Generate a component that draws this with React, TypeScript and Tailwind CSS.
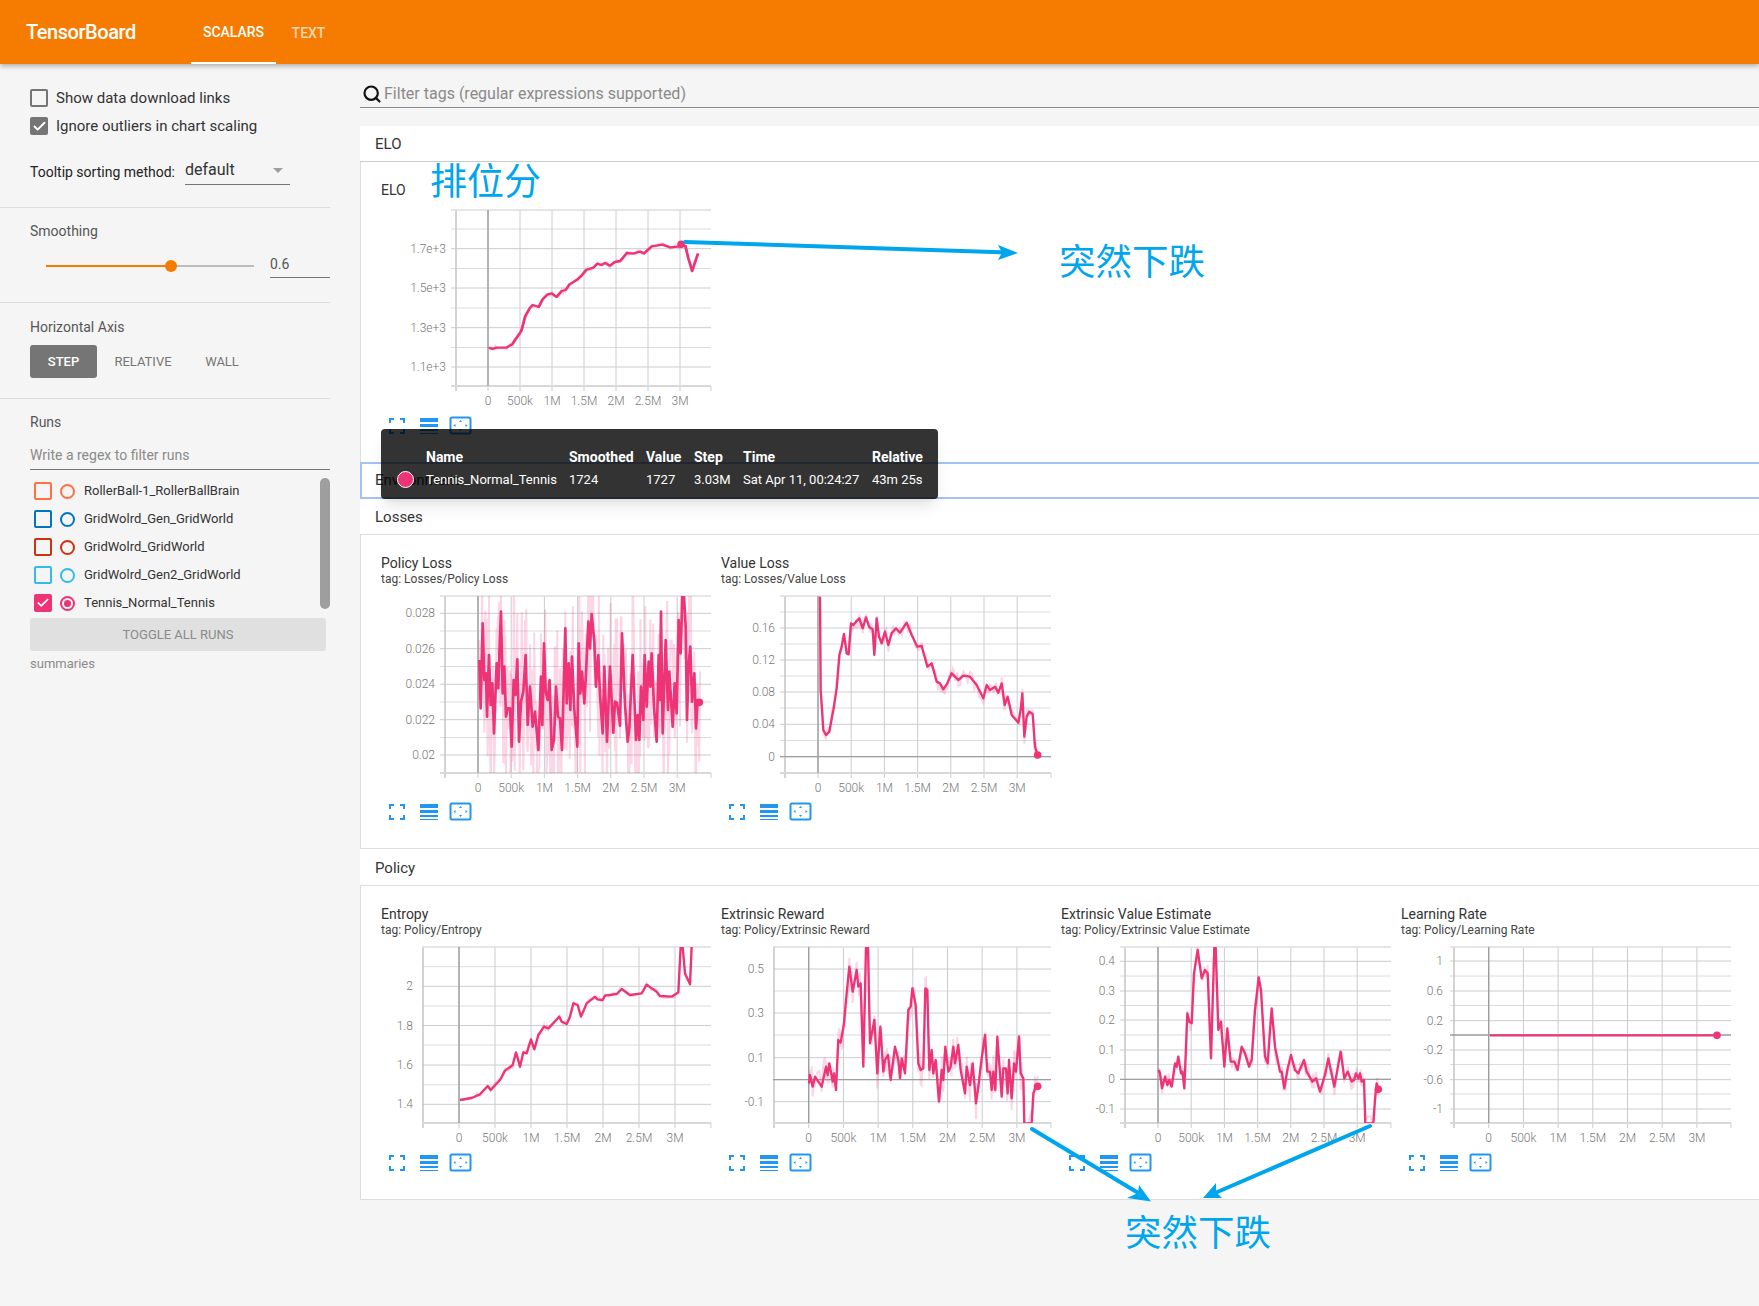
import React from 'react';
import { Search, Check } from 'lucide-react';

type Pt = [number, number];

interface Series {
  origin: Pt;
  scaleX?: number;
  smooth: Pt[];
  jitter: number;
  dot: Pt;
  width?: number;
}

interface ChartProps {
  title: string;
  tag?: string;
  svgTop: number;
  cardX: number;
  left: number;
  axisX: number;
  x0: number;
  dx: number;
  top: number;
  bottom: number;
  labelGap?: number;
  major: [number, string][];
  minor: number[];
  zeroY?: number;
  series: Series;
}

const RUN = '#ee3377';
const X_LABELS = ['0', '500k', '1M', '1.5M', '2M', '2.5M', '3M'];

// stable noise for the faded raw line
const noise = (i: number) => {
  const v = Math.sin(i * 12.9898 + 4.1) * 43758.5453;
  return (v - Math.floor(v)) * 2 - 1;
};

const rawLine = (pts: Pt[], amp: number): Pt[] => {
  const out: Pt[] = [];
  pts.forEach((p, i) => {
    out.push([p[0], p[1] + noise(i) * amp]);
    const next = pts[i + 1];
    if (!next) return;
    for (let k = 1; k < 3; k++) {
      const t = k / 3;
      out.push([p[0] + (next[0] - p[0]) * t, p[1] + (next[1] - p[1]) * t + noise(i * 3 + k + 300) * amp]);
    }
  });
  return out;
};

const toPoints = (pts: Pt[]) => pts.map(p => p.join(',')).join(' ');

const Chart: React.FC<ChartProps> = ({ title, tag, svgTop, cardX, left, axisX, x0, dx, top, bottom, labelGap = 5, major, minor, zeroY, series }) => {
  const right = cardX + 330;
  const clip = 'clip-' + title.replace(/\s/g, '');
  const sx = series.scaleX ?? 3;
  const vertical = X_LABELS.map((_, i) => x0 + dx * i);
  return (
    <div className="w-[340px] shrink-0">
      <div className="h-[17px] text-[14px] leading-[17px] text-[#333]">{title}</div>
      {tag ? <div className="h-[14px] mb-1 text-[12px] leading-[14px] text-[#444]">{tag}</div> : <div className="h-[5px]" />}
      <svg width={340} height={208} className="block">
        <g transform={`translate(${-cardX} ${-svgTop})`}>
          <clipPath id={clip}>
            <rect x={axisX} y={top} width={right - axisX} height={bottom - top} />
          </clipPath>
          {minor.map(y => (
            <line key={y} x1={left} x2={right} y1={y} y2={y} stroke="#dcdcdc" />
          ))}
          {major.map(([y]) => (
            <line key={y} x1={left} x2={right} y1={y} y2={y} stroke="#cccccc" />
          ))}
          {vertical.map(x => (
            <line key={x} x1={x} x2={x} y1={top} y2={bottom + 5} stroke="#cccccc" />
          ))}
          <line x1={axisX} x2={axisX} y1={top} y2={bottom + 5} stroke="#c4c4c4" strokeWidth={1.5} />
          <line x1={right} x2={right} y1={bottom} y2={bottom + 5} stroke="#cfcfcf" />
          <line x1={left} x2={right} y1={top} y2={top} stroke="#dedede" strokeWidth={1.5} />
          <line x1={left} x2={right} y1={bottom} y2={bottom} stroke="#d8d8d8" strokeWidth={2} />
          {zeroY !== undefined && <line x1={left} x2={right} y1={zeroY} y2={zeroY} stroke="#9e9e9e" strokeWidth={1.3} />}
          <line x1={x0} x2={x0} y1={top} y2={bottom} stroke="#9e9e9e" strokeWidth={1.4} />
          {major.map(([y, label]) => (
            <text key={label} x={left - labelGap} y={y + 4} textAnchor="end" fontSize={12} fontWeight={300} fill="#777">
              {label}
            </text>
          ))}
          {X_LABELS.map((label, i) => (
            <text key={label} x={x0 + dx * i} y={bottom + 19} textAnchor="middle" fontSize={12} fontWeight={300} fill="#777">
              {label}
            </text>
          ))}
          <g clipPath={`url(#${clip})`}>
            <g transform={`translate(${series.origin[0]} ${series.origin[1]}) scale(${1 / sx} ${1 / 3})`}>
              {series.jitter > 0 && (
                <polyline points={toPoints(rawLine(series.smooth, series.jitter))} fill="none" stroke={RUN} strokeOpacity={0.2} strokeWidth={6} />
              )}
              <polyline points={toPoints(series.smooth)} fill="none" stroke={RUN} strokeWidth={series.width ?? 7} strokeLinejoin="round" />
            </g>
          </g>
          <circle cx={series.origin[0] + series.dot[0] / sx} cy={series.origin[1] + series.dot[1] / 3} r={3.8} fill={RUN} />
        </g>
      </svg>
      <ChartIcons />
    </div>
  );
};

const ChartIcons = () => (
  <svg width={100} height={20} className="block mt-[4px]" fill="none">
    <g stroke="#2196f3" strokeWidth={2}>
      <path d="M9 7V3h4M19 3h4v4M23 13v4h-4M13 17H9v-4" />
      <rect x={69.5} y={1.5} width={20} height={16} rx={1.5} />
    </g>
    <g fill="#2196f3">
      <rect x={39} y={2} width={18} height={4} />
      <rect x={39} y={8} width={18} height={3} />
      <rect x={39} y={13} width={18} height={2} />
      <rect x={39} y={17} width={18} height={1} />
      <path d="M79.5 4l1.5 2h-3zM79.5 15l1.5-2h-3zM72.5 9.5l2-1.5v3zM86.5 9.5l-2-1.5v3z" />
    </g>
  </svg>
);

const policyLoss: Pt[] = [[358,360],[362,505],[368,250],[373,420],[378,400],[381,530],[387,345],[392,495],[397,430],[402,580],[410,370],[415,445],[418,340],[423,215],[428,460],[433,380],[438,530],[443,505],[450,505],[455,620],[461,420],[466,465],[472,358],[477,605],[483,485],[490,455],[497,345],[503,555],[510,440],[518,560],[525,515],[535,630],[543,410],[547,555],[552,310],[557,455],[563,480],[569,420],[575,630],[582,600],[588,440],[594,530],[600,535],[606,630],[616,265],[620,490],[626,370],[631,510],[636,350],[643,510],[652,620],[656,310],[661,460],[666,395],[673,490],[678,400],[685,245],[690,325],[695,222],[703,305],[708,440],[715,345],[720,465],[728,580],[733,380],[741,605],[750,380],[755,480],[760,578],[765,485],[771,488],[780,557],[786,280],[795,495],[803,605],[808,565],[818,345],[828,600],[833,525],[838,600],[843,440],[850,540],[854,345],[860,500],[866,365],[871,440],[875,340],[882,500],[890,605],[896,345],[900,480],[903,215],[908,580],[917,300],[924,510],[928,395],[938,560],[944,430],[950,520],[956,240],[962,340],[967,170],[972,170],[977,260],[981,540],[986,370],[991,320],[996,485],[1003,400],[1008,565],[1013,480],[1020,485]];
const valueLoss: Pt[] = [[330,170],[332,450],[340,570],[348,585],[358,575],[370,510],[380,445],[388,345],[395,320],[402,282],[410,340],[416,343],[423,250],[430,255],[438,245],[448,235],[458,265],[468,232],[478,262],[488,268],[493,345],[500,235],[507,290],[515,310],[525,275],[535,315],[545,280],[558,265],[570,278],[590,248],[605,285],[622,320],[635,318],[652,380],[665,370],[680,425],[690,430],[700,448],[712,430],[725,400],[735,410],[745,420],[760,407],[780,410],[800,435],[820,475],[830,435],[840,450],[855,440],[865,458],[875,430],[884,495],[893,470],[905,525],[925,548],[932,510],[937,460],[943,590],[950,530],[958,515],[968,522],[975,620],[983,645]];
const elo: Pt[] = [[326,650],[335,654],[345,650],[370,650],[385,640],[395,622],[408,600],[418,555],[430,530],[437,522],[452,528],[462,505],[475,490],[485,487],[497,498],[510,480],[520,477],[530,460],[548,447],[558,437],[572,417],[590,410],[600,398],[610,402],[620,396],[632,404],[645,393],[658,390],[675,366],[690,368],[708,362],[718,367],[738,346],[765,341],[785,349],[805,347],[812,342],[823,345],[830,380],[840,420],[855,367]];
const entropy: Pt[] = [[300,630],[335,624],[360,613],[383,588],[392,600],[420,570],[435,542],[458,525],[468,487],[480,530],[490,487],[500,490],[513,448],[523,478],[535,435],[552,410],[565,415],[598,380],[605,395],[620,402],[630,380],[640,340],[653,345],[663,380],[680,340],[705,320],[712,328],[728,330],[735,317],[770,312],[785,297],[810,315],[845,310],[860,284],[875,295],[890,305],[900,318],[935,320],[955,307],[962,170],[968,170],[975,250],[990,283],[995,170]];
const reward: Pt[] = [[297,580],[300,555],[308,590],[315,560],[335,590],[348,530],[353,555],[358,520],[368,575],[372,550],[378,600],[385,450],[392,458],[402,400],[408,330],[418,230],[428,305],[440,240],[445,290],[452,280],[460,530],[468,170],[474,170],[480,460],[493,390],[502,550],[511,410],[520,545],[525,510],[534,495],[542,570],[555,470],[565,510],[570,565],[575,505],[585,550],[595,360],[602,350],[607,295],[617,345],[625,520],[632,540],[640,535],[646,295],[652,300],[658,540],[665,480],[670,550],[677,510],[687,635],[695,540],[700,570],[706,470],[715,545],[722,530],[730,470],[735,520],[745,465],[752,540],[765,610],[770,530],[780,585],[788,520],[798,640],[805,590],[815,505],[825,435],[832,545],[840,545],[845,600],[850,545],[856,600],[862,440],[875,620],[880,535],[888,535],[893,610],[897,510],[905,625],[912,520],[918,545],[927,440],[932,550],[940,565],[943,700],[965,700],[970,610],[977,590],[985,590]];
const valueEstimate: Pt[] = [[326,540],[330,550],[336,595],[345,560],[352,585],[358,570],[365,590],[375,520],[380,530],[385,500],[393,550],[397,545],[403,595],[412,370],[418,395],[425,400],[432,250],[443,180],[455,265],[465,240],[473,250],[483,505],[493,170],[497,170],[505,420],[513,395],[523,530],[532,415],[542,515],[553,515],[563,540],[575,470],[585,490],[597,530],[605,510],[615,360],[626,262],[633,300],[645,500],[653,520],[665,355],[675,470],[690,545],[695,545],[703,595],[712,540],[723,495],[735,540],[745,550],[762,510],[770,545],[787,575],[793,570],[798,565],[810,605],[825,555],[835,505],[853,590],[872,485],[883,565],[893,545],[905,575],[912,570],[918,550],[925,565],[930,550],[935,575],[942,570],[946,700],[970,700],[975,630],[980,580],[985,598]];

const LOSS_TOP = 590;
const POLICY_TOP = 941;

const lossCharts: ChartProps[] = [
  {
    title: 'Policy Loss', tag: 'tag: Losses/Policy Loss', svgTop: LOSS_TOP, cardX: 381, left: 440, axisX: 445, x0: 478, dx: 33.2, top: 596, bottom: 773,
    major: [[613.3, '0.028'], [648.7, '0.026'], [684.3, '0.024'], [719.7, '0.022'], [755, '0.02']],
    minor: [631, 666.5, 702, 737.5],
    series: { origin: [360, 540], smooth: policyLoss, jitter: 260, dot: [1018, 487], width: 8 },
  },
  {
    title: 'Value Loss', tag: 'tag: Losses/Value Loss', svgTop: LOSS_TOP, cardX: 721, left: 780, axisX: 785, x0: 818, dx: 33.2, top: 596, bottom: 773,
    major: [[628, '0.16'], [660, '0.12'], [692, '0.08'], [724.3, '0.04'], [756.7, '0']],
    minor: [612, 644, 676, 708, 740.5],
    zeroY: 756.7,
    series: { origin: [710, 540], smooth: valueLoss, jitter: 22, dot: [983, 645] },
  },
];

const policyCharts: ChartProps[] = [
  {
    title: 'Entropy', tag: 'tag: Policy/Entropy', svgTop: POLICY_TOP, cardX: 381, left: 422, axisX: 423, x0: 459, dx: 36, top: 947, bottom: 1123, labelGap: 9,
    major: [[986.3, '2'], [1025.5, '1.8'], [1065, '1.6'], [1104.3, '1.4']],
    minor: [966.7, 1006, 1045, 1084.7],
    series: { origin: [360, 890], smooth: entropy, jitter: 8, dot: [995, 100] },
  },
  {
    title: 'Extrinsic Reward', tag: 'tag: Policy/Extrinsic Reward', svgTop: POLICY_TOP, cardX: 721, left: 773, axisX: 774, x0: 808.7, dx: 34.7, top: 947, bottom: 1123, labelGap: 9,
    major: [[969, '0.5'], [1013, '0.3'], [1057.7, '0.1'], [1101.7, '-0.1']],
    minor: [991, 1035, 1079.7],
    zeroY: 1079.7,
    series: { origin: [710, 890], smooth: reward, jitter: 50, dot: [983, 589] },
  },
  {
    title: 'Extrinsic Value Estimate', tag: 'tag: Policy/Extrinsic Value Estimate', svgTop: POLICY_TOP, cardX: 1061, left: 1120, axisX: 1125, x0: 1158, dx: 33.2, top: 947, bottom: 1123,
    major: [[961.3, '0.4'], [991, '0.3'], [1020, '0.2'], [1050, '0.1'], [1079.3, '0'], [1109, '-0.1']],
    minor: [976, 1005.5, 1035, 1064.5, 1094],
    zeroY: 1079.3,
    series: { origin: [1050, 890], smooth: valueEstimate, jitter: 26, dot: [985, 598] },
  },
  {
    title: 'Learning Rate', tag: 'tag: Policy/Learning Rate', svgTop: POLICY_TOP, cardX: 1401, left: 1450, axisX: 1454, x0: 1488.7, dx: 34.7, top: 947, bottom: 1123, labelGap: 7,
    major: [[961, '1'], [991, '0.6'], [1020.7, '0.2'], [1050, '-0.2'], [1079.7, '-0.6'], [1109, '-1']],
    minor: [976, 1005.5, 1035, 1064.5, 1094],
    zeroY: 1035,
    series: { origin: [1390, 890], smooth: [[300, 436], [980, 436]], jitter: 0, dot: [981, 436] },
  },
];

const eloChart: ChartProps = {
  title: 'ELO', svgTop: 203, cardX: 381, left: 451, axisX: 456, x0: 488, dx: 32, top: 209, bottom: 385,
  major: [[247.7, '1.7e+3'], [287, '1.5e+3'], [326.7, '1.3e+3'], [366, '1.1e+3']],
  minor: [228, 267.5, 307, 346.5],
  series: { origin: [360, 130], scaleX: 2.529, smooth: elo, jitter: 6, dot: [812, 340] },
};

const runs = [
  { name: 'RollerBall-1_RollerBallBrain', color: '#ff7043' },
  { name: 'GridWolrd_Gen_GridWorld', color: '#0077bb' },
  { name: 'GridWolrd_GridWorld', color: '#cc3311' },
  { name: 'GridWolrd_Gen2_GridWorld', color: '#33bbee' },
  { name: 'Tennis_Normal_Tennis', color: '#ee3377', checked: true },
];

const Sidebar = () => (
  <aside className="w-[330px] shrink-0 text-[14px] text-[#444]">
    <div className="h-[144px] border-b border-[#ddd] pl-[30px] pt-[25px]">
      <label className="flex items-center h-[18px] gap-2 text-[15px] text-[#333]">
        <span className="w-[18px] h-[18px] rounded-[2px] border-2 border-[#757575]" />
        Show data download links
      </label>
      <label className="flex items-center h-[18px] gap-2 mt-[10px] text-[15px] text-[#333]">
        <span className="w-[18px] h-[18px] rounded-[2px] bg-[#757575] flex items-center justify-center">
          <Check size={15} color="white" strokeWidth={3} />
        </span>
        Ignore outliers in chart scaling
      </label>
      <div className="flex items-start mt-[19px]">
        <span className="mt-[8px] text-[#222]">Tooltip sorting method:</span>
        <div className="ml-[10px] w-[105px] h-[31px] border-b border-[#757575] flex items-center justify-between pr-[7px] pt-[2px] text-[16px] text-[#333]">
          default
          <span className="w-0 h-0 border-x-[5px] border-x-transparent border-t-[5px] border-t-[#9e9e9e]" />
        </div>
      </div>
    </div>
    <div className="h-[95px] border-b border-[#ddd] pl-[30px] pt-[15px]">
      <div className="text-[#555] leading-[17px]">Smoothing</div>
      <div className="flex items-center mt-[8px] h-[30px]">
        <div className="ml-[16px] mt-[6px] w-[208px] h-[2px] bg-[#bdbdbd] relative">
          <div className="w-[125px] h-[2px] bg-[#f57c00]" />
          <div className="absolute left-[119px] top-[-5px] w-[12px] h-[12px] rounded-full bg-[#f57c00]" />
        </div>
        <div className="ml-[16px] w-[60px] h-[30px] border-b border-[#757575] pt-[6px] text-[#555]">0.6</div>
      </div>
    </div>
    <div className="h-[96px] border-b border-[#ddd] pl-[30px] pt-[16px]">
      <div className="text-[#555] leading-[17px]">Horizontal Axis</div>
      <div className="flex items-center mt-[9px] text-[13px] text-[#757575]">
        <div className="w-[67px] h-[33px] rounded-[3px] bg-[#757575] text-white font-medium flex items-center justify-center">STEP</div>
        <div className="w-[92px] text-center">RELATIVE</div>
        <div className="w-[66px] text-center">WALL</div>
      </div>
    </div>
    <div className="pl-[30px] pt-[15px]">
      <div className="text-[#555] leading-[17px]">Runs</div>
      <div className="h-[33px] mt-[6px] flex items-center pt-[5px] border-b border-[#757575] text-[#8a8a8a]">Write a regex to filter runs</div>
      <div className="flex mt-[7px] h-[134px]">
        <div className="w-[290px] pl-[4px]">
          {runs.map(run => (
            <div key={run.name} className="h-[28px] flex items-center text-[13px] text-[#333]">
              <span
                className="w-[18px] h-[18px] rounded-[2px] border-2 flex items-center justify-center"
                style={{ borderColor: run.color, background: run.checked ? run.color : 'transparent' }}
              >
                {run.checked && <Check size={14} color="white" strokeWidth={3} />}
              </span>
              <span className="ml-[8px] w-[15px] h-[15px] rounded-full border-2 flex items-center justify-center" style={{ borderColor: run.color }}>
                {run.checked && <span className="w-[7px] h-[7px] rounded-full" style={{ background: run.color }} />}
              </span>
              <span className="ml-[9px]">{run.name}</span>
            </div>
          ))}
        </div>
        <div className="w-[10px] h-[131px] mt-[1px] rounded-[5px] bg-[#9e9e9e]" />
      </div>
      <div className="w-[296px] h-[33px] mt-[7px] rounded-[3px] bg-[#e0e0e0] flex items-center justify-center text-[13px] text-[#8a8a8a]">TOGGLE ALL RUNS</div>
      <div className="mt-[3px] text-[13px] text-[#8a8a8a]">summaries</div>
    </div>
  </aside>
);

const Tooltip = () => (
  <div className="absolute left-[381px] top-[429px] w-[557px] h-[70px] rounded-[4px] bg-[rgba(0,0,0,0.8)] shadow-lg text-[13px] text-white">
    <div className="flex items-center h-[16px] mt-[20px] text-[14px] font-bold pl-[45px]">
      <span className="w-[143px]">Name</span>
      <span className="w-[77px] whitespace-nowrap">Smoothed</span>
      <span className="w-[48px]">Value</span>
      <span className="w-[49px]">Step</span>
      <span className="w-[129px]">Time</span>
      <span>Relative</span>
    </div>
    <div className="relative flex items-center h-[16px] mt-[7px] pl-[45px]">
      <span className="absolute left-[16px] top-[-1px] w-[17px] h-[17px] rounded-full bg-[#ee3377] border-[1.5px] border-white" />
      <span className="w-[143px]">Tennis_Normal_Tennis</span>
      <span className="w-[77px]">1724</span>
      <span className="w-[48px]">1727</span>
      <span className="w-[49px]">3.03M</span>
      <span className="w-[129px] whitespace-nowrap">Sat Apr 11, 00:24:27</span>
      <span>43m 25s</span>
    </div>
  </div>
);

const Annotations = () => (
  <>
    <svg width={1759} height={1306} className="absolute left-0 top-0 pointer-events-none">
      <g stroke="#00a6ed" strokeWidth={4} strokeLinecap="round">
        <line x1={685} y1={242} x2={1008} y2={252.5} />
        <line x1={1032} y1={1129} x2={1140} y2={1194} />
        <line x1={1370} y1={1126} x2={1215} y2={1193} />
      </g>
      <g fill="#00a6ed">
        <polygon points="1018,253 998,245 1002,252.5 998,260" />
        <polygon points="1151,1201.5 1139,1185 1138,1193 1127,1198" />
        <polygon points="1203,1198 1222,1198 1216,1192 1216,1183" />
      </g>
    </svg>
    <div className="absolute left-[430px] top-[153px] text-[37px] leading-[52px] text-[#00a6ed] font-['Noto_Sans_CJK_SC',sans-serif]">排位分</div>
    <div className="absolute left-[1059px] top-[234px] text-[36.5px] leading-[52px] text-[#00a6ed] font-['Noto_Sans_CJK_SC',sans-serif]">突然下跌</div>
    <div className="absolute left-[1125px] top-[1205px] text-[36.5px] leading-[52px] text-[#00a6ed] font-['Noto_Sans_CJK_SC',sans-serif]">突然下跌</div>
  </>
);

export default function App() {
  return (
    <div className="relative w-[1759px] h-[1306px] overflow-hidden bg-[#f5f5f5] font-[Roboto,sans-serif]">
      <header className="relative z-10 h-16 bg-[#f57c00] shadow-[0_2px_5px_rgba(0,0,0,0.3)] flex text-white">
        <div className="w-[191px] pl-[26px] pt-[18px] text-[20px] leading-[28px] font-medium tracking-[-0.45px]">TensorBoard</div>
        <div className="w-[85px] h-16 border-b-2 border-white flex items-center justify-center pt-[2px] text-[14px] font-medium">SCALARS</div>
        <div className="w-[65px] h-16 flex items-center justify-center pt-[2px] text-[14px] font-medium text-white/70">TEXT</div>
      </header>
      <div className="flex">
        <Sidebar />
        <main className="ml-[30px] flex-1 min-w-0">
          <div className="h-[44px] border-b border-[#8a8a8a] flex items-center pt-[17px] text-[16px] text-[#8a8a8a]">
            <Search size={20} color="#111" strokeWidth={2.6} className="ml-[2px] mr-[2px]" />
            Filter tags (regular expressions supported)
          </div>
          <section className="mt-[18px]">
            <div className="h-[36px] bg-white border-b border-[#ccc] pl-[15px] pt-[1px] flex items-center text-[15px] text-[#333]">ELO</div>
            <div className="h-[300px] bg-white border-l border-[#ddd] pl-[20px] pt-[20px]">
              <Chart {...eloChart} />
            </div>
          </section>
          <div className="h-[37px] bg-white border-y-2 border-l-2 border-[#a4c2f4] pl-[13px] flex items-center text-[15px] text-[#333]">Environment</div>
          <section>
            <div className="h-[36px] bg-white border-b border-[#ddd] pl-[15px] pt-[1px] flex items-center text-[15px] text-[#333]">Losses</div>
            <div className="h-[314px] bg-white border-l border-b border-[#ddd] pl-[20px] pt-[20px] flex">
              {lossCharts.map(chart => (
                <Chart key={chart.title} {...chart} />
              ))}
            </div>
          </section>
          <section>
            <div className="h-[37px] bg-white border-b border-[#ddd] pl-[15px] pt-[2px] flex items-center text-[15px] text-[#333]">Policy</div>
            <div className="h-[314px] bg-white border-l border-b border-[#ddd] pl-[20px] pt-[20px] flex">
              {policyCharts.map(chart => (
                <Chart key={chart.title} {...chart} />
              ))}
            </div>
          </section>
        </main>
      </div>
      <Tooltip />
      <Annotations />
    </div>
  );
}
